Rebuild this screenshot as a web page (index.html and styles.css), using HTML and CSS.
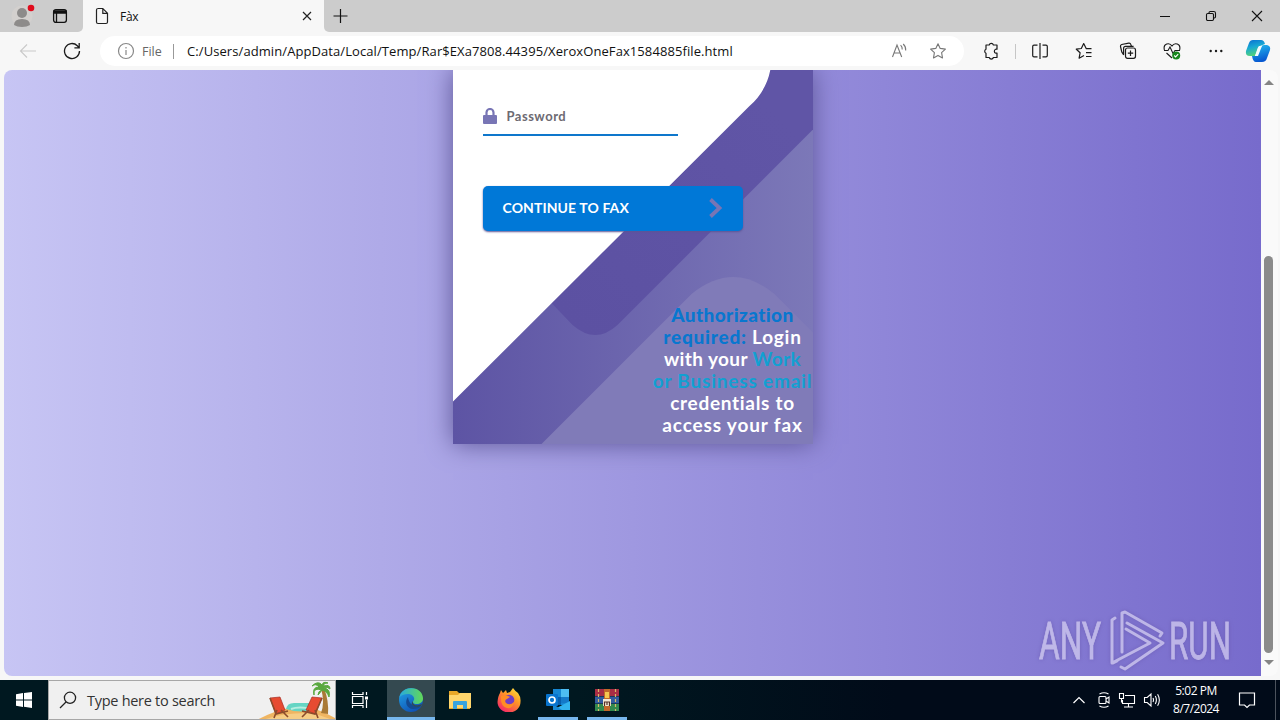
FILE: index.html
```html
<!DOCTYPE html>
<html lang="en">
<head>
<meta charset="utf-8">
<title>Fàx</title>
<link rel="stylesheet" href="styles.css">
</head>
<body>
<div class="tabstrip">
  <div class="tab-left">
    <svg class="avatar" width="24" height="26" viewBox="0 0 24 26"><circle cx="11" cy="13" r="10.5" fill="#d3d0ce"/><circle cx="11" cy="10" r="5" fill="#8d8b8a"/><path d="M3 22q0-6 8-6t8 6q-3 2-8 2t-8-2z" fill="#8d8b8a"/><circle cx="20" cy="5" r="3.3" fill="#e00b1c"/></svg>
    <svg class="tabs-icon" width="16" height="16" viewBox="0 0 16 16" fill="none" stroke="#111" stroke-width="1.3"><rect x="1.6" y="1.6" width="12.8" height="12.8" rx="2.3"/><path d="M2 3h12v2H2z" fill="#111"/><path d="M4.5 5v9"/></svg>
  </div>
  <div class="tab">
    <svg width="14" height="18" viewBox="0 0 14 18" fill="none" stroke="#222" stroke-width="1.2"><path d="M2.5 1.5h5.3l4.7 4.7v8.8q0 1.5-1.5 1.5H3q-1.5 0-1.5-1.5V3q0-1.5 1.5-1.5M7.8 1.5v4.9h4.7"/></svg>
    <span class="tab-title">Fàx</span>
    <svg class="tab-close" width="10" height="10" viewBox="0 0 10 10" stroke="#222" stroke-width="1.2"><path d="M1 1l8 8M9 1L1 9"/></svg>
  </div>
  <div class="tab-rest">
    <svg width="16" height="16" viewBox="0 0 16 16" stroke="#111" stroke-width="1.2"><path d="M8.500 1v14M1.500 8h14"/></svg>
    <div class="win-buttons">
      <svg width="12" height="12" viewBox="0 0 12 12" stroke="#111" fill="none"><path d="M1 6.5h10"/></svg>
      <svg width="12" height="12" viewBox="0 0 12 12" stroke="#111" fill="none" stroke-width="1.1"><rect x="1.5" y="3.5" width="7" height="7" rx="1.2"/><path d="M4 3V2.8q0-1.3 1.3-1.3h3.5q1.7 0 1.7 1.7v3.6q0 1.2-1.2 1.2H9"/></svg>
      <svg width="12" height="12" viewBox="0 0 12 12" stroke="#111" fill="none" stroke-width="1.1"><path d="M1 1l10 10M11 1L1 11"/></svg>
    </div>
  </div>
</div>
<div class="toolbar">
  <svg class="back" width="18" height="16" viewBox="0 0 18 16" fill="none" stroke="#c9c9c9" stroke-width="1.1"><path d="M17 8H1.5M8 1.5L1.5 8 8 14.5"/></svg>
  <svg class="reload" width="18" height="18" viewBox="0 0 18 18" fill="none" stroke="#1b1b1b" stroke-width="1.3"><path d="M16.5 9a7.5 7.5 0 1 1-2.2-5.3L16 5.6M16.2 1v4.8h-4.8"/></svg>
  <div class="address">
    <svg width="18" height="18" viewBox="0 0 18 18" fill="none" stroke="#888" stroke-width="1.2"><circle cx="9" cy="9" r="7.5"/><path d="M9 8v5M9 5v1.5"/></svg>
    <span class="scheme">File</span>
    <span class="bar"></span>
    <span class="url">C:/Users/admin/AppData/Local/Temp/Rar$EXa7808.44395/XeroxOneFax1584885file.html</span>
    <svg class="read" width="18" height="16" viewBox="0 0 18 16" fill="none" stroke="#777" stroke-width="1.1"><path d="M1.5 14L6 2l4.7 12M3.2 10h5.7M9.6 2.2q1.8 1.6 1.6 4.3M12.2 1q2.8 2.5 2.5 6.5"/></svg>
    <svg class="star" width="18" height="18" viewBox="0 0 18 18" fill="none" stroke="#777" stroke-width="1.1" stroke-linejoin="round"><path d="M9 1.7l2.2 4.7 5.2.7-3.8 3.6.9 5.2L9 13.4l-4.5 2.5.9-5.2-3.8-3.6 5.2-.7z"/></svg>
  </div>
  <div class="tools">
    <svg width="18" height="18" viewBox="0 0 18 18" fill="none" stroke="#1b1b1b" stroke-width="1.2" stroke-linejoin="round"><path d="M4 3h3.200a2.200 2.200 0 0 1 4.200 0H15v4.200h-1.200a2.100 2.100 0 0 0 0 4H15v4.300h-3.600a2.200 2.200 0 0 1-4.200 0H4v-4.300a2.200 2.200 0 0 1 0-4z"/></svg>
    <span class="sep"></span>
    <svg width="18" height="18" viewBox="0 0 18 18" fill="none" stroke="#1b1b1b" stroke-width="1.2"><path d="M6.5 3.2H3q-1.3 0-1.3 1.3v9q0 1.3 1.3 1.3h3.5M11.5 3.2H15q1.3 0 1.3 1.3v9q0 1.3-1.3 1.3h-3.5M9 1v16"/></svg>
    <svg width="18" height="18" viewBox="0 0 18 18" fill="none" stroke="#1b1b1b" stroke-width="1.2" stroke-linejoin="round"><path d="M16.5 6.7h-5.2L8.7 1.6 6.3 6.5l-5 .7 3.8 3.6-1 5.4L9 13.5M11 10.7h5.5M11 14.5h5.5"/></svg>
    <svg width="18" height="18" viewBox="0 0 18 18" fill="none" stroke="#1b1b1b" stroke-width="1.2"><rect x="6.5" y="6" width="10" height="10.3" rx="2"/><path d="M11.5 8.5v5.4M8.8 11.2h5.4M4.7 13L2.8 9.9 1.5 4.5q-.3-1.5 1.2-2l7-1.3q1.6-.3 2.1 1.2L12.4 4M4.600 13V6.300q0-2 2-2h8"/></svg>
    <svg width="18" height="18" viewBox="0 0 18 18" fill="none" stroke="#1b1b1b" stroke-width="1.1"><path d="M1.400 8C-.3 1.200 6.600.2 9 4c2.400-3.800 9.300-2.800 7.600 4M1 8.500h4l2-3.500 3 6.500 2-3h5M3.500 11L9 16"/><circle cx="13.200" cy="13.500" r="4" fill="#16861b" stroke="none"/><path d="M11.200 13.500l1.400 1.400 2.600-2.700" stroke="#fff"/></svg>
    <svg width="18" height="18" viewBox="0 0 18 18" fill="#1b1b1b"><circle cx="3.700" cy="9" r="1.200"/><circle cx="9" cy="9" r="1.200"/><circle cx="14.300" cy="9" r="1.200"/></svg>
    <svg class="copilot" width="26" height="24" viewBox="0 0 26 24"><defs><linearGradient id="c1" x2=".3" y2="1"><stop stop-color="#096dd2"/><stop offset=".5" stop-color="#18a9d3"/><stop offset="1" stop-color="#52d27b"/></linearGradient><linearGradient id="c2" x2=".3" y2="1"><stop stop-color="#23bff0"/><stop offset="1" stop-color="#0759d1"/></linearGradient></defs><path d="M8 1h8q3 0 4 4l-5 2q-2 0-3 4l-2 6H5q-5 0-4-5L4 4q1-3 4-3z" fill="url(#c1)"/><path d="M19 6h3q4 1 3 5l-3 8q-1 4-5 4h-6q-3 0-4-6h4q2-1 3-5l2-4q1-2 3-2z" fill="url(#c2)"/><path d="M14 7h3l-4 10h-3z" fill="#f2fbff"/></svg>
  </div>
</div>
<main class="viewport">
  <div class="page">
    <section class="card">
      <svg class="shapes" width="360" height="374" viewBox="452.500 70 360 374"><defs><linearGradient id="band" gradientUnits="userSpaceOnUse" x1="575" y1="325" x2="780" y2="120"><stop stop-color="#5c51a2"/><stop offset="1" stop-color="#6055a6"/></linearGradient></defs>
        <path d="M813 70H740L551 303L572 325Q595 345 617 325L813 129z" fill="url(#band)"/>
        <path d="M541 444L691 294Q733 260 774 294L813 333V444z" fill="#807bb8"/>
        <path d="M452 69H770Q766 91 749 106L452 402z" fill="#fff"/></svg>
      <div class="form">
        <div class="field">
          <svg width="14" height="16" viewBox="0 0 14 16"><path d="M3.500 7V4.500a3.500 3.500 0 0 1 7 0V7" fill="none" stroke="#7875b5" stroke-width="2.200"/><rect y="7" width="14" height="9" rx="1" fill="#7875b5"/></svg>
          <span>Password</span>
        </div>
        <div class="button"><span>CONTINUE TO FAX</span><svg width="16" height="22" viewBox="0 0 16 22" fill="none" stroke="#7875b5" stroke-width="3.800"><path d="M2.500 2.500L11.500 11 2.500 19.500"/></svg></div>
      </div>
      <div class="notice"><div class="n1"><b>Authorization</b></div><div class="n2"><b>required:</b> Login</div><div class="n3">with your <i>Work</i></div><div class="n4"><i>or Business email</i></div><div class="n5">credentials to</div><div class="n6">access your fax</div></div>
    </section>
    <svg class="watermark" width="210" height="70" viewBox="1035 605 210 70"><g fill="none" stroke="#d6d0f1" stroke-width="3" stroke-linejoin="round" stroke-linecap="round"><path d="M1115 618L1112 620V663L1150 643 1126 629M1113 663L1117 661M1122 652V613L1125 612 1162 633 1160 636M1127 623L1163 643 1125 669 1121 667M1121 659"/></g><g class="mark-text"><text x="1039" y="659" textLength="62" lengthAdjust="spacingAndGlyphs">ANY</text><text x="1169" y="659" textLength="62" lengthAdjust="spacingAndGlyphs">RUN</text></g></svg>
  </div>
  <div class="scrollbar"><i class="up"></i><span class="thumb"></span><i class="down"></i></div>
</main>
<footer class="taskbar">
  <div class="start"><svg width="16" height="16" viewBox="0 0 16 16" fill="#fff"><path d="M0 2.200L7 1v6.500H0zM8 .9L16 0v7.500H8zM0 8.500h7V15l-7-1.200zM8 8.500h8V16l-8-1.200z"/></svg></div>
  <div class="search">
    <svg width="18" height="18" viewBox="0 0 18 18" fill="none" stroke="#222" stroke-width="1.300"><circle cx="11" cy="6.800" r="5.600"/><path d="M7 11L1 17"/></svg>
    <span>Type here to search</span>
    <svg class="beach" width="79" height="38" viewBox="256 681 79 38"><path d="M257 720q16-9 36-13 23-1 42 11v2z" fill="#efb562"/><path d="M263 720q20-8 50-7l20 7z" fill="#f6cd85"/><path d="M286 709q1-6 8-6h15q7 0 7 6-14 5-30 0z" fill="#65d5c4"/><path d="M291 709q8-3 21 0" stroke="#b6eee0" stroke-width="2" fill="none"/><path d="M321 713q4-10 0-25h3q5 13 4 26z" fill="#a97935"/><path d="M322 690q-9-3-8 5-2-8 5-8-3-4-7-1 6-6 10-1 1-4 6-2-5 0-4 3 6-2 6 3-3-3-6-1 7 1 5 9-2-6-7-7-2 3-4 5 0-4 4-5z" fill="#59a83e" stroke="#59a83e"/><path d="M270 698l10-1 5 13-9 4zM322 698l-10-1-6 13 9 4z" fill="#e74b31" stroke="#a82d24" stroke-width=".7"/><path d="M270 698l6 16 12-3M277 710l-3 8M281 710l7 7M322 698l-7 16-13-3M315 710l3 8M309 710l-7 7" fill="none" stroke="#8c4b2b" stroke-width="1.600"/></svg>
  </div>
  <div class="app"><svg width="18" height="18" viewBox="0 0 18 18" fill="none" stroke="#fff" stroke-width="1.200"><path d="M1.500 1v2.500H12V1M1.500 17v-2.500H12V17M1.500 5.500H12v7H1.500zM15.500 1v3M15.500 9v8"/><path d="M14 5.500h3v3h-3z" fill="#fff" stroke="none"/></svg></div>
  <div class="app active open"><svg width="24" height="24" viewBox="0 0 24 24"><defs><linearGradient id="e1" x2="1"><stop stop-color="#27a9df"/><stop offset="1" stop-color="#62d957"/></linearGradient><linearGradient id="e2" y2="1" x2=".6"><stop stop-color="#22a7e8"/><stop offset="1" stop-color="#1052b5"/></linearGradient></defs><circle cx="12" cy="12" r="12" fill="url(#e2)"/><path d="M.2 10C2-3 23-3 24 10c.3 4-3 6-6 6-4 0-5-2-3-4 1-3-2-6-6-6-4 0-7 1-8.800 4z" fill="url(#e1)"/><path d="M9 9c-4 5-1 12 5 12 4 0 7-1 8-3-5 1-12 0-13-9z" fill="#144a91"/><path d="M14 13c-1 3 2 5 6 4 1 0 2-1 3-1l-1 2c-5 2-12-1-8-5z" fill="#33484e"/></svg></div>
  <div class="app"><svg width="22" height="20" viewBox="0 0 22 20"><path d="M0 1h8l2 2h11v16H0z" fill="#e9a828"/><path d="M0 5h9l2-2h11v15H0z" fill="#ffd66c"/><path d="M4 19v-7q0-1 1-1h12q1 0 1 1v7h-4v-4H8v4z" fill="#38a3dd"/></svg></div>
  <div class="app"><svg width="24" height="24" viewBox="0 0 24 24"><defs><linearGradient id="f1" x1="1" x2=".3" y2="1"><stop stop-color="#fff044"/><stop offset=".45" stop-color="#ff9826"/><stop offset="1" stop-color="#f52a65"/></linearGradient></defs><path d="M3 5l1-3 2 3 3-3 1 3 3-1 3-4q2 3 5 5 3 4 2.500 9a11.500 10.500 0 0 1-23 0Q1 8 3 5z" fill="url(#f1)"/><circle cx="12" cy="12" r="5.300" fill="#713ec5"/><path d="M4 8q5-2 9 1l-3 2q-3 1-1 4 4 3 8-1-1 7-7 6-7-2-6-12z" fill="#ff8c24"/></svg></div>
  <div class="app open narrow"><svg width="24" height="22" viewBox="0 0 24 22"><path d="M7 0h16v16H7z" fill="#1687d4"/><path d="M15 0h8v8h-8z" fill="#4dbdf2"/><path d="M7 8h8v8H7z" fill="#075faf"/><path d="M15 8h8v6h-8z" fill="#1479c9"/><path d="M7 21h17V12z" fill="#32b3ef"/><path d="M7 15l9 6H7z" fill="#1687d4"/><rect y="5" width="12" height="12" rx="1" fill="#0874ce"/><circle cx="6" cy="11" r="3" fill="none" stroke="#fff" stroke-width="1.700"/></svg></div>
  <div class="app open narrow"><svg width="24" height="22" viewBox="0 0 24 22"><path d="M0 0h24v7H0z" fill="#a82d45"/><path d="M0 7.500h24v7H0z" fill="#315b9e"/><path d="M0 15h24v7H0z" fill="#31894e"/><path d="M3.500 0v22M20.500 0v22" stroke="#d7b869" stroke-width="1.200" stroke-dasharray="3 2"/><path d="M9 0h6v22H9z" fill="#c2682a"/><path d="M10 3h4v6h-4z" fill="#f6c850"/><path d="M8 10h8v7H8z" fill="#f3e8d3"/><path d="M9.500 17v-4h5v4M12 13v3" fill="none" stroke="#553029" stroke-width="1.200"/></svg></div>
  <div class="tray">
    <svg width="14" height="18" viewBox="0 0 14 18" fill="none" stroke="#fff" stroke-width="1.200"><path d="M1.500 12L7 6.500l5.500 5.500"/></svg>
    <svg width="14" height="18" viewBox="0 0 14 18" fill="none" stroke="#fff" stroke-width="1.100"><rect x="2" y="5.500" width="7" height="7" rx="1"/><path d="M9 8l3-2v6l-3-2M2.500 3Q7 .5 11.500 3M2.500 15q4.500 2.500 9 0"/></svg>
    <svg width="18" height="18" viewBox="0 0 18 18" fill="none" stroke="#fff" stroke-width="1.100"><path d="M7 4.500h9.500v8h-12V9M10.500 13v3M6 16h9M1.500 2.500h4v5h-4zM3.500 7.500v4"/></svg>
    <svg width="18" height="18" viewBox="0 0 18 18" fill="none" stroke="#fff" stroke-width="1.100"><path d="M1.500 6.500h2.700L8 3v12l-3.800-3.500H1.500zM10 7q1 2 0 4M12.300 5q2.200 4 0 8M14.600 3.200q3.500 5.800 0 11.600"/></svg>
    <div class="clock"><span>5:02 PM</span><span>8/7/2024</span></div>
    <svg width="18" height="18" viewBox="0 0 18 18" fill="none" stroke="#fff" stroke-width="1.200"><path d="M1.500 2h15v12h-5L9 16.500 6.500 14h-5z"/></svg>
    <span class="peek"></span>
  </div>
</footer>
</body>
</html>
```
FILE: styles.css
```css
* { box-sizing: border-box; }
body { margin: 0; width: 1280px; height: 720px; overflow: hidden; display: flex; flex-direction: column; background: #f7f7f7; font: 13px "Open Sans", "Noto Sans", sans-serif; color: #111; }
svg { display: block; flex: none; }
span { white-space: nowrap; }

.tabstrip { height: 32px; display: flex; background: #f7f7f7; flex: none; }
.tab-left { width: 83px; background: #ccc; border-bottom-right-radius: 5px; display: flex; padding-left: 11px; }
.avatar { margin-top: 3px; }
.tabs-icon { margin: 8px 0 0 17px; }
.tab { width: 241px; display: flex; align-items: center; padding: 0 12px; }
.tab-title { margin-left: 11px; font-size: 12px; letter-spacing: -.3px; }
.tab-close { margin-left: auto; }
.tab-rest { flex: 1; background: #ccc; border-bottom-left-radius: 5px; display: flex; align-items: center; justify-content: space-between; padding: 0 17px 0 8px; }
.win-buttons { display: flex; gap: 34px; }

.toolbar { height: 38px; flex: none; display: flex; align-items: center; padding: 0 9px 0 19px; }
.reload { margin-left: 26px; }
.address { margin-left: 19px; width: 864px; height: 30px; border-radius: 15px; background: #fff; display: flex; align-items: center; padding: 0 17px; color: #111; }
.scheme { color: #666; margin-left: 7px; width: 20px; font-size: 12.5px; }
.bar { width: 1px; height: 15px; background: #999; margin: 0 13px 0 11px; }
.url { width: 546px; font-size: 13px; letter-spacing: .085px; }
.read { margin-left: auto; }
.star { margin-left: 20px; }
.tools { flex: 1; display: flex; align-items: center; margin-left: 18px; gap: 26px; }
.tools .sep { width: 1px; height: 15px; background: #c6c6c6; margin: 0 -11px; }
.tools .copilot { margin-left: -6px; }

.viewport { height: 610px; flex: none; display: flex; padding: 0 2px 4px 4px; }
.page { position: relative; width: 1257px; border-radius: 8px 0 0 8px; overflow: hidden; background: linear-gradient(90deg, #c7c5f4, #776bcc); padding-left: 448.500px; }
.card { position: relative; width: 360px; height: 374px; background: linear-gradient(90deg, #5d54a4, #7c78b8); box-shadow: 0 0 24px #5c5696; display: grid; }
.shapes { grid-area: 1 / 1; width: 360px; height: 374px; }
.form { grid-area: 1 / 1; padding: 38px 30px; z-index: 1; font-family: Lato, "Open Sans", sans-serif; }
.field { height: 28px; width: 195px; border-bottom: 2px solid #0e77cc; display: flex; gap: 10px; color: #6d6a72; font-weight: bold; font-size: 13px; line-height: 17px; }
.field span { letter-spacing: .5px; }
.button { margin-top: 50px; width: 260px; height: 45px; background: #0078d7; border-radius: 5px; box-shadow: 0 1px 2px #5c5696; display: flex; align-items: center; justify-content: space-between; padding: 0 19px 2px 20px; color: #fff; font-weight: bold; font-size: 14px; letter-spacing: .1px; }
.notice { grid-area: 1 / 1; z-index: 1; justify-self: end; align-self: end; width: 160px; text-align: center; color: #fff; font: bold 19px/22px Lato, "Open Sans", sans-serif; padding-bottom: 8px; white-space: nowrap; }
.notice b { color: #0877cf; }
.notice i { color: #12a0d2; font-style: normal; }
.n1 { letter-spacing: .4px; }
.n2 { letter-spacing: .75px; }
.n3 { letter-spacing: .4px; }
.n4 { letter-spacing: .8px; }
.n5 { letter-spacing: .7px; }
.n6 { letter-spacing: .85px; }
.watermark { position: absolute; right: 16px; bottom: 1px; opacity: .72; filter: drop-shadow(0 0 2px #6a5bb0); }
.mark-text { font: 400 51px Roboto, sans-serif; fill: #d6d0f1; stroke: #d6d0f1; stroke-width: .9px; }
.scrollbar { flex: 1; background: #fafafa; border-radius: 0 8px 8px 0; display: flex; flex-direction: column; align-items: center; padding: 10px 1px 10px 0; }
.thumb { width: 9px; height: 397px; margin-top: 171px; margin-bottom: 7px; margin-right: 1px; border-radius: 5px; background: #8b8b8b; }
.up, .down { flex: none; margin-right: 1px; border: 5px solid transparent; border-top: 0; border-bottom: 5px solid #858585; }
.down { border-bottom: 0; border-top: 5px solid #858585; }

.taskbar { height: 40px; flex: none; display: flex; background: linear-gradient(90deg, #001820 0, #001820 45%, #010b19 70%); }
.start { width: 48px; display: grid; place-items: center; }
.search { width: 288px; background: #f0f0f0; border: 1px solid #a7a7a7; display: flex; align-items: center; padding-left: 10px; font-size: 14.5px; color: #333; }
.search span { margin-left: 10px; letter-spacing: -.28px; }
.beach { margin-left: auto; }
.app { width: 48px; margin-right: 1px; display: grid; place-items: center; position: relative; }
.app.active { background: #344950; margin-left: 2px; }
.app.open { box-shadow: inset 0 -3px #77b7ee; }
.app.narrow { box-shadow: none; }
.app.narrow::after { content: ""; position: absolute; bottom: 0; width: 40px; height: 3px; background: #77b7ee; }
.tray { margin-left: auto; display: flex; align-items: center; color: #fff; }
.tray > svg { margin-right: 7px; }
.tray > svg:nth-child(1) { margin-right: 11px; }
.clock { width: 62px; display: flex; flex-direction: column; align-items: center; font-size: 12px; line-height: 18px; letter-spacing: -.45px; margin: 0 11px 0 -3px; }
.clock span:last-child { letter-spacing: -.5px; }
.peek { width: 1px; height: 40px; background: #4c535d; margin: 0 4px 0 12px; }
```
